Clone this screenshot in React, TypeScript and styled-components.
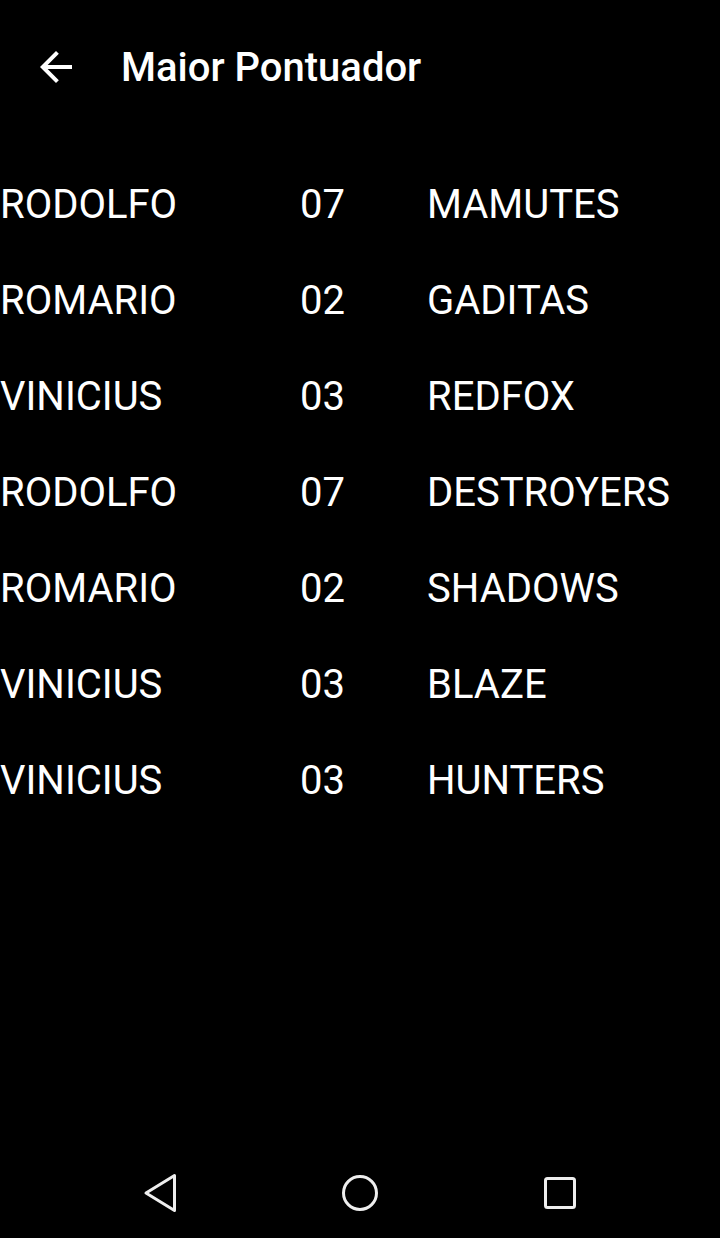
import React from "react";
import styled, { createGlobalStyle } from "styled-components";

const Global = createGlobalStyle`
  html, body { margin: 0; padding: 0; background: #000; }
  body { font-family: Roboto, "Noto Sans", sans-serif; color: #fff; }
`;

const Screen = styled.div`
  width: 720px;
  height: 1238px;
  background: #000;
  display: flex;
  flex-direction: column;
`;

const Toolbar = styled.header`
  height: 134px;
  display: flex;
  align-items: center;
  padding-left: 32px;
  box-sizing: border-box;
  flex-shrink: 0;
`;

const BackButton = styled.div`
  width: 48px;
  height: 48px;
  display: flex;
  align-items: center;
  justify-content: center;
  margin-right: 41px;
`;

const Title = styled.h1`
  margin: 0;
  font-family: Roboto, sans-serif;
  font-weight: 500;
  font-size: 40px;
  color: #fff;
  letter-spacing: 0;
`;

const List = styled.div`
  flex: 1;
  display: flex;
  flex-direction: column;
  padding-top: 22px;
`;

const Row = styled.div`
  height: 96px;
  display: grid;
  grid-template-columns: 300px 127px 1fr;
  align-items: center;
`;

const Cell = styled.span`
  font-family: Roboto, sans-serif;
  font-size: 40px;
  color: #fff;
  white-space: nowrap;
`;

const NavBar = styled.nav`
  height: 90px;
  display: flex;
  align-items: center;
  justify-content: center;
  gap: 156px;
  flex-shrink: 0;
`;

const NavIcon = styled.svg`
  width: 44px;
  height: 44px;
  display: block;
`;

const rows = [
  ["RODOLFO", "07", "MAMUTES"],
  ["ROMARIO", "02", "GADITAS"],
  ["VINICIUS", "03", "REDFOX"],
  ["RODOLFO", "07", "DESTROYERS"],
  ["ROMARIO", "02", "SHADOWS"],
  ["VINICIUS", "03", "BLAZE"],
  ["VINICIUS", "03", "HUNTERS"],
];

export default function App() {
  return (
    <>
      <Global />
      <Screen>
        <Toolbar>
          <BackButton>
            <svg width="48" height="48" viewBox="0 0 24 24">
              <path
                d="M20 11H7.83l5.59-5.59L12 4l-8 8 8 8 1.41-1.41L7.83 13H20v-2z"
                fill="#fff"
              />
            </svg>
          </BackButton>
          <Title>Maior Pontuador</Title>
        </Toolbar>
        <List>
          {rows.map((r, i) => (
            <Row key={i}>
              <Cell>{r[0]}</Cell>
              <Cell>{r[1]}</Cell>
              <Cell>{r[2]}</Cell>
            </Row>
          ))}
        </List>
        <NavBar>
          <NavIcon viewBox="0 0 44 44">
            <path
              d="M36.5 4.5 L36.5 39.5 L8 22 Z"
              fill="none"
              stroke="#eee"
              strokeWidth="3"
              strokeLinejoin="round"
            />
          </NavIcon>
          <NavIcon viewBox="0 0 44 44">
            <circle cx="22" cy="22" r="16.5" fill="none" stroke="#eee" strokeWidth="3" />
          </NavIcon>
          <NavIcon viewBox="0 0 44 44">
            <rect x="7.5" y="7.5" width="29" height="29" rx="2" fill="none" stroke="#eee" strokeWidth="3" />
          </NavIcon>
        </NavBar>
      </Screen>
    </>
  );
}
